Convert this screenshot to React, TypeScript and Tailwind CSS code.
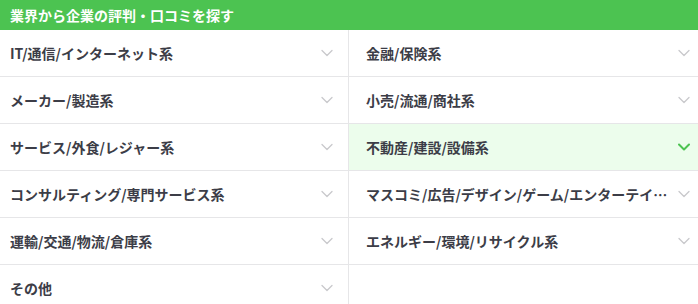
import React from 'react';

// ─── Data ─────────────────────────────────────────────────────
const INDUSTRIES = [
  'IT/通信/インターネット系',
  '金融/保険系',
  'メーカー/製造系',
  '小売/流通/商社系',
  'サービス/外食/レジャー系',
  '不動産/建設/設備系',
  'コンサルティング/専門サービス系',
  'マスコミ/広告/デザイン/ゲーム/エンターテイメント系',
  '運輸/交通/物流/倉庫系',
  'エネルギー/環境/リサイクル系',
  'その他',
];

const ACTIVE = 5;

// ─── Chevron ──────────────────────────────────────────────────
const Chevron = ({ active }: { active: boolean }) => (
  <svg width="12" height="8" viewBox="0 0 12 8" fill="none" className="shrink-0">
    <path
      d="M1 1.5L6 6.5L11 1.5"
      stroke={active ? '#4cc351' : '#c9c9cc'}
      strokeWidth={active ? 2 : 1.3}
      strokeLinecap="round"
      strokeLinejoin="round"
    />
  </svg>
);

// ─── Cell ─────────────────────────────────────────────────────
const Cell = ({ label, index }: { label?: string; index: number }) => {
  const left = index % 2 === 0;
  const active = index === ACTIVE;
  return (
    <div
      className={
        'h-[47px] flex items-center border-b border-[#e6e6e8] ' +
        (left ? 'border-r pl-[10px] pr-[15px] ' : 'pl-[17px] pr-[8px] ') +
        (active ? 'bg-[#ecfdec]' : 'bg-white')
      }
    >
      {label && (
        <>
          <span className="flex-1 min-w-0 truncate pr-[9px] text-[14px] font-bold text-[#3c3d47]">
            {label}
          </span>
          <Chevron active={active} />
        </>
      )}
    </div>
  );
};

export default function App() {
  const cells: (string | undefined)[] = [...INDUSTRIES, undefined];
  return (
    <div
      className="w-[698px] h-[304px] overflow-hidden bg-white"
      style={{ fontFamily: '"Noto Sans CJK JP", "Noto Sans", sans-serif' }}
    >
      <div className="h-[30px] bg-[#4cc351] flex items-center px-[10px]">
        <p className="text-[14px] font-bold text-white leading-none">業界から企業の評判・口コミを探す</p>
      </div>
      <div className="grid grid-cols-2">
        {cells.map((label, i) => (
          <Cell key={i} label={label} index={i} />
        ))}
      </div>
    </div>
  );
}
